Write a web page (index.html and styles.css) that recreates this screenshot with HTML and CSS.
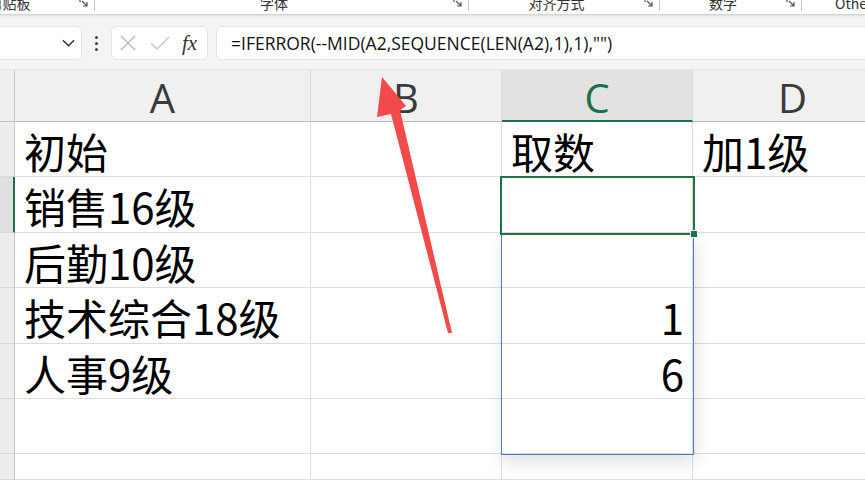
FILE: index.html
```html
<!DOCTYPE html>
<html lang="zh-CN">
<head>
<meta charset="UTF-8">
<meta name="viewport" content="width=device-width, initial-scale=1.0">
<title>取数</title>
<link rel="stylesheet" href="styles.css">
</head>
<body>

<!-- ribbon group labels, mostly scrolled out of view -->
<div class="ribbon">
  <div class="group first">
    <span class="label">剪贴板</span>
    <svg class="launcher" viewBox="0 0 10 10"><path d="M1 1h3M1 1v3M3 3l5 5M8 4v4H4" /></svg>
  </div>
  <div class="group font">
    <span class="label">字体</span>
    <svg class="launcher" viewBox="0 0 10 10"><path d="M1 1h3M1 1v3M3 3l5 5M8 4v4H4" /></svg>
  </div>
  <div class="group align">
    <span class="label">对齐方式</span>
    <svg class="launcher" viewBox="0 0 10 10"><path d="M1 1h3M1 1v3M3 3l5 5M8 4v4H4" /></svg>
  </div>
  <div class="group number">
    <span class="label">数字</span>
    <svg class="launcher" viewBox="0 0 10 10"><path d="M1 1h3M1 1v3M3 3l5 5M8 4v4H4" /></svg>
  </div>
  <div class="group other">
    <span class="label">Other</span>
  </div>
</div>

<div class="formula-bar">
  <div class="namebox">
    <svg class="chevron" viewBox="0 0 14 8"><path d="M1 1l6 6 6-6" /></svg>
  </div>
  <div class="dots"><span></span><span></span><span></span></div>
  <div class="fxbox">
    <svg class="cancel" viewBox="0 0 16 16"><path d="M1 1l14 14M15 1L1 15" /></svg>
    <svg class="enter" viewBox="0 0 20 14"><path d="M1 7l6 6L19 1" /></svg>
    <span class="fx">fx</span>
  </div>
  <div class="formula">=IFERROR(--MID(A2,SEQUENCE(LEN(A2),1),1),"")</div>
</div>

<div class="sheet">
  <div class="corner"></div>
  <div class="colhead">A</div>
  <div class="colhead">B</div>
  <div class="colhead active">C</div>
  <div class="colhead">D</div>

  <div class="rowhead"></div>
  <div class="cell">初始</div>
  <div class="cell"></div>
  <div class="cell">取数</div>
  <div class="cell">加1级</div>

  <div class="rowhead active"></div>
  <div class="cell">销售16级</div>
  <div class="cell"></div>
  <div class="cell"></div>
  <div class="cell"></div>

  <div class="rowhead"></div>
  <div class="cell">后勤10级</div>
  <div class="cell"></div>
  <div class="cell"></div>
  <div class="cell"></div>

  <div class="rowhead"></div>
  <div class="cell">技术综合18级</div>
  <div class="cell"></div>
  <div class="cell num">1</div>
  <div class="cell"></div>

  <div class="rowhead"></div>
  <div class="cell">人事9级</div>
  <div class="cell"></div>
  <div class="cell num">6</div>
  <div class="cell"></div>

  <div class="rowhead"></div>
  <div class="cell"></div>
  <div class="cell"></div>
  <div class="cell"></div>
  <div class="cell"></div>

  <div class="rowhead"></div>
  <div class="cell"></div>
  <div class="cell"></div>
  <div class="cell"></div>
  <div class="cell"></div>

  <!-- spill range and the active cell drawn over the grid -->
  <div class="spill"></div>
  <div class="selection"><span class="handle"></span></div>
</div>

<svg class="arrow" viewBox="0 0 865 480">
  <path d="M382 77 L406 106 L400 110 L452 333 L448 333 L391 114 L377 117 Z" />
</svg>

</body>
</html>
```

FILE: styles.css
```css
* {
  box-sizing: border-box;
}

html, body {
  overflow: hidden;
}

body {
  margin: 0;
  width: 865px;
  height: 480px;
  position: relative;
  background: #fff;
  font-family: "Noto Sans CJK SC", "Noto Sans", sans-serif;
}

/* ribbon strip */
.ribbon {
  display: flex;
  height: 15px;
  background: #fff;
  border-bottom: 1px solid #d4d4d4;
  box-shadow: 0 1px 2px rgba(0, 0, 0, 0.1);
  overflow: hidden;
  position: relative;
  z-index: 1;
}

.group {
  display: flex;
  align-items: flex-start;
  height: 11px;
  border-right: 1px solid #c8c8c8;
  flex-shrink: 0;
}

.group.first {
  width: 155px;
  margin-left: -60px;
}
.group.font { width: 374px; }
.group.align { width: 191px; }
.group.number { width: 142px; }
.group.other { width: 120px; border-right: none; }

.group .label {
  flex: 1;
  text-align: center;
  font-size: 14px;
  line-height: 14px;
  margin-top: -4px;
  color: #333;
  white-space: nowrap;
}

.group.other .label {
  flex: none;
  margin-left: 33px;
}

.launcher {
  width: 10px;
  height: 10px;
  margin: -2px 5px 0 0;
  fill: none;
  stroke: #555;
  stroke-width: 1.2;
}

/* formula bar */
.formula-bar {
  display: flex;
  align-items: flex-start;
  height: 55px;
  padding-top: 11px;
  background: #f4f4f4;
  border-bottom: 1px solid #e6e6e6;
}

.namebox {
  width: 88px;
  height: 34px;
  margin-left: -6px;
  background: #fff;
  border: 1px solid #e3e3e3;
  border-radius: 6px;
  display: flex;
  align-items: center;
  justify-content: flex-end;
  padding-right: 6px;
}

.chevron {
  width: 13px;
  height: 8px;
  fill: none;
  stroke: #333;
  stroke-width: 1.6;
}

.dots {
  width: 29px;
  height: 34px;
  display: flex;
  flex-direction: column;
  align-items: center;
  justify-content: center;
  gap: 3px;
}

.dots span {
  width: 3px;
  height: 3px;
  border-radius: 50%;
  background: #444;
}

.fxbox {
  width: 97px;
  height: 34px;
  background: #fff;
  border: 1px solid #e3e3e3;
  border-radius: 6px;
  display: flex;
  align-items: center;
  padding-left: 8px;
}

.cancel {
  width: 16px;
  height: 16px;
  fill: none;
  stroke: #b4b4b4;
  stroke-width: 1.3;
}

.enter {
  width: 20px;
  height: 14px;
  margin-left: 14px;
  fill: none;
  stroke: #c4c4c4;
  stroke-width: 1.3;
}

.fx {
  margin-left: 12px;
  font-family: "Liberation Serif", serif;
  font-style: italic;
  font-size: 21px;
  color: #333;
  line-height: 1;
}

.formula {
  flex: 1;
  height: 34px;
  margin-left: 8px;
  margin-right: -10px;
  background: #fff;
  border: 1px solid #e3e3e3;
  border-radius: 6px;
  padding-left: 14px;
  font-family: "Open Sans", sans-serif;
  font-size: 17.5px;
  line-height: 32px;
  color: #111;
  white-space: nowrap;
  overflow: hidden;
}

/* grid */
.sheet {
  position: relative;
  display: grid;
  grid-template-columns: 15px 296px 191px 191px 200px;
  grid-template-rows: 52px repeat(6, 55.4px) 26px;
}

.corner {
  background: #efefef;
  border-right: 1px solid #c8c8c8;
  border-bottom: 1px solid #bdbdbd;
}

.colhead {
  background: #f0f0f0;
  border-right: 1px solid #dadada;
  border-bottom: 1px solid #bdbdbd;
  text-align: center;
  font-family: "Open Sans", sans-serif;
  font-size: 40px;
  line-height: 48px;
  padding-top: 4px;
  color: #3a3a3a;
  overflow: hidden;
}

.colhead.active {
  background: #e2e2e2;
  color: #1e7145;
  border-bottom: 2px solid #1e7145;
}

.rowhead {
  background: #ededed;
  border-right: 1px solid #c8c8c8;
  border-bottom: 1px solid #d8d8d8;
}

.rowhead.active {
  background: #e0e0e0;
  border-right: 2px solid #1e7145;
}

.cell {
  border-right: 1px solid #dcdcdc;
  border-bottom: 1px solid #dcdcdc;
  padding: 4px 8px 0 9px;
  font-size: 42px;
  line-height: 50px;
  color: #000;
  white-space: nowrap;
  overflow: hidden;
}

.cell.num {
  text-align: right;
  padding-right: 8px;
}

.spill {
  position: absolute;
  left: 501px;
  top: 163px;
  width: 193px;
  height: 222px;
  border: 1.5px solid #4d7bcb;
  box-shadow: 2px 8px 16px rgba(0, 0, 0, 0.12);
}

.selection {
  position: absolute;
  left: 500px;
  top: 106px;
  width: 195px;
  height: 59px;
  border: 2px solid #1f7244;
}

.handle {
  position: absolute;
  right: -5px;
  bottom: -5px;
  width: 8px;
  height: 8px;
  background: #1f7244;
  border: 1px solid #fff;
}

.arrow {
  position: absolute;
  left: 0;
  top: 0;
  width: 865px;
  height: 480px;
  pointer-events: none;
}

.arrow path {
  fill: #f24a4a;
}
```
